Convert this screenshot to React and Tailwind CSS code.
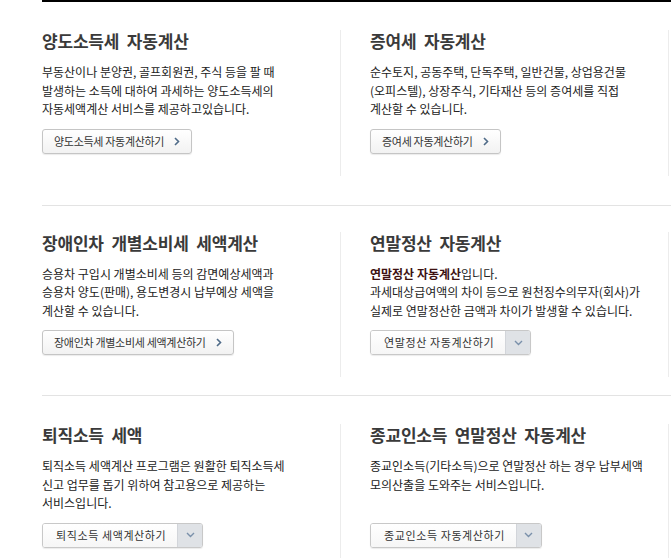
import React from "react";

const sections = [
  [
    {
      title: "양도소득세 자동계산",
      lines: [
        "부동산이나 분양권, 골프회원권, 주식 등을 팔 때",
        "발생하는 소득에 대하여 과세하는 양도소득세의",
        "자동세액계산 서비스를 제공하고있습니다.",
      ],
      button: "양도소득세 자동계산하기",
      type: "link",
    },
    {
      title: "증여세 자동계산",
      lines: [
        "순수토지, 공동주택, 단독주택, 일반건물, 상업용건물",
        "(오피스텔), 상장주식, 기타재산 등의 증여세를 직접",
        "계산할 수 있습니다.",
      ],
      button: "증여세 자동계산하기",
      type: "link",
    },
  ],
  [
    {
      title: "장애인차 개별소비세 세액계산",
      lines: [
        "승용차 구입시 개별소비세 등의 감면예상세액과",
        "승용차 양도(판매), 용도변경시 납부예상 세액을",
        "계산할 수 있습니다.",
      ],
      button: "장애인차 개별소비세 세액계산하기",
      type: "link",
    },
    {
      title: "연말정산 자동계산",
      lead: "연말정산 자동계산",
      lines: [
        "입니다.",
        "과세대상급여액의 차이 등으로 원천징수의무자(회사)가",
        "실제로 연말정산한 금액과 차이가 발생할 수 있습니다.",
      ],
      button: "연말정산 자동계산하기",
      type: "select",
    },
  ],
  [
    {
      title: "퇴직소득 세액",
      lines: [
        "퇴직소득 세액계산 프로그램은 원활한 퇴직소득세",
        "신고 업무를 돕기 위하여 참고용으로 제공하는",
        "서비스입니다.",
      ],
      button: "퇴직소득 세액계산하기",
      type: "select",
    },
    {
      title: "종교인소득 연말정산 자동계산",
      lines: [
        "종교인소득(기타소득)으로 연말정산 하는 경우 납부세액",
        "모의산출을 도와주는 서비스입니다.",
      ],
      button: "종교인소득 자동계산하기",
      type: "select",
    },
  ],
];

const rowPad = ["pt-[28px] pb-[29px]", "pt-[26px] pb-[18px]", "pt-[28px] pb-[20px]"];

function LinkButton({ label }) {
  return (
    <button className="inline-flex items-center h-[25px] pl-[11px] pr-[11px] border border-[#c5c5c5] rounded-[3px] bg-gradient-to-b from-white to-[#f2f2f2] shadow-[0_1px_1px_rgba(0,0,0,0.08)] text-[11px] tracking-[-0.3px] text-[#333]">
      <span>{label}</span>
      <svg width="6" height="9" viewBox="0 0 6 9" className="ml-[10px]">
        <polyline points="1,1 4.5,4.5 1,8" fill="none" stroke="#4f6b88" strokeWidth="1.6" />
      </svg>
    </button>
  );
}

function SelectButton({ label }) {
  return (
    <div className="inline-flex h-[25px] border border-[#c8c8c8] rounded-[3px] overflow-hidden shadow-[0_1px_1px_rgba(0,0,0,0.08)] text-[11px] tracking-[0.6px] text-[#333]">
      <span className="flex items-center pl-[13px] pr-[11px] bg-gradient-to-b from-white to-[#f6f6f6]">
        {label}
      </span>
      <span className="flex items-center justify-center w-[25px] bg-[#dfe2e6] border-l border-[#d2d5da]">
        <svg width="9" height="6" viewBox="0 0 9 6">
          <polyline points="1,1 4.5,4.5 8,1" fill="none" stroke="#7a90aa" strokeWidth="1.4" />
        </svg>
      </span>
    </div>
  );
}

function Cell({ item, first }) {
  return (
    <div className={`w-[299px] shrink-0 border-r border-[#ececec] pb-[22px] flex flex-col items-start ${first ? "" : "ml-[29px]"}`}>
      <h3 className="h-[22px] leading-[22px] text-[17px] font-bold tracking-[-0.2px] [word-spacing:4px] text-[#3a3a3a]">
        {item.title}
      </h3>
      <p className="mt-[11px] min-h-[55.5px] text-[12px] leading-[18.5px] text-[#222]">
        {item.lead && <b className="font-bold text-[#3d1212]">{item.lead}</b>}
        {item.lines.map((l, i) => (
          <React.Fragment key={i}>
            {l}
            {i < item.lines.length - 1 && <br />}
          </React.Fragment>
        ))}
      </p>
      <div className="mt-[10px] flex">
        {item.type === "link" ? <LinkButton label={item.button} /> : <SelectButton label={item.button} />}
      </div>
    </div>
  );
}

export default function App() {
  return (
    <div className="w-[671px] h-[558px] overflow-hidden bg-white" style={{ fontFamily: '"Noto Sans CJK KR", "Noto Sans", sans-serif' }}>
      <div className="ml-[42px] border-t-2 border-black">
        {sections.map((row, r) => (
          <div key={r} className={`flex border-b border-[#e3e3e3] ${rowPad[r]}`}>
            {row.map((item, i) => (
              <Cell key={i} item={item} first={i === 0} />
            ))}
          </div>
        ))}
      </div>
    </div>
  );
}
